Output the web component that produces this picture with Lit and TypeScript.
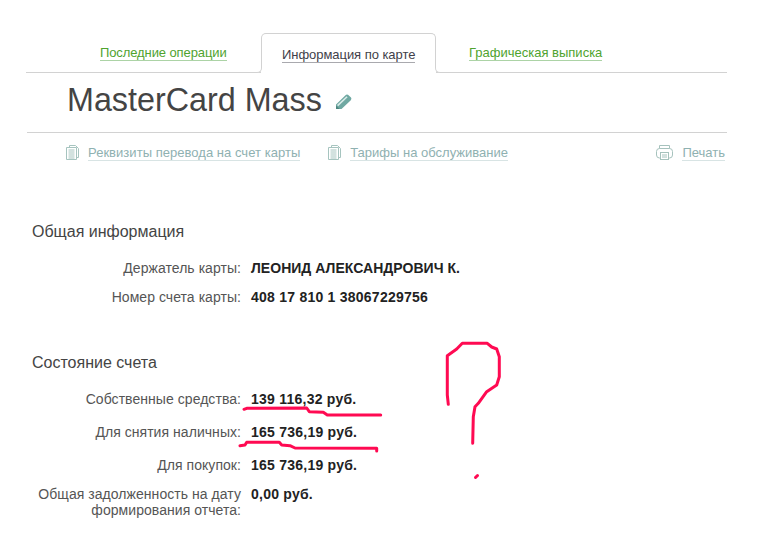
import { LitElement, html, css, svg } from "lit";
import { customElement } from "lit/decorators.js";

const docIcon = html`<svg class="ico" width="13" height="15" viewBox="0 0 13 15" fill="none" stroke="#a6c4bf" stroke-width="1">
  <path d="M3.500 2V.5h6l3 3v9h-1.500"/><path d="M.5 2.500h10v12H.5z" fill="#fff"/><path d="M2.500 5h6M2.500 7h6M2.500 9h6M2.500 11h6M2.500 13h6"/>
</svg>`;

const printIcon = html`<svg class="ico" width="17" height="15" viewBox="0 0 17 15" fill="none" stroke="#a6c2bd" stroke-width="1">
  <path d="M3.500 3.500V.5h10v3"/><rect x=".5" y="3.500" width="16" height="9.500" rx="3"/><rect x="4.500" y="7.500" width="8" height="7" fill="#fff"/><path d="M6 10h5M6 12h5"/>
</svg>`;

const pencilIcon = html`<svg class="pencil" width="16" height="15" viewBox="0 0 16 15">
  <path d="M0 15V10.500L9.500 1.200Q10.700 0 12 0.800L15 3.600Q16 5 14.800 6.200L5.500 15Z" fill="#6fa8a2"/>
  <path d="M1 11L10.500 2.300L11.600 3.300L2.200 12.300Z" fill="#d9ebe8"/>
  <path d="M0 15V11.500L3.700 15Z" fill="#4d8780"/>
</svg>`;

const strokes = [
  "244,409.3 246.7,408.3 306.7,408 309.3,411.7 323.3,412.3 327.3,415 380.7,415",
  "240,445.7 245,445 246.7,442.3 279.3,442.3 281.7,445 290,445.7 295,448 376.7,448.3 376.7,451",
  "448.3,404.3 447.3,395 447.3,355.7 456.7,349 462.3,343.3 487.3,343.3 491.7,347 496.7,349 499.3,356.7 499.3,376.7 496.7,385 486.7,391.7 478.3,403.3 475,406.7 473.3,416.7 472.7,443.3",
  "475.500,477.500 477.500,475.500",
];

interface Row { label: string; value: string; tight?: boolean; num?: boolean }

const info: Row[] = [
  { label: "Держатель карты:", value: "ЛЕОНИД АЛЕКСАНДРОВИЧ К.", tight: true },
  { label: "Номер счета карты:", value: "408 17 810 1 38067229756", tight: true, num: true },
];
const state: Row[] = [
  { label: "Собственные средства:", value: "139 116,32 руб.", num: true },
  { label: "Для снятия наличных:", value: "165 736,19 руб.", num: true },
  { label: "Для покупок:", value: "165 736,19 руб.", tight: true, num: true },
  { label: "Общая задолженность на дату формирования отчета:", value: "0,00 руб.", tight: true, num: true },
];

@customElement("app-root")
export class AppRoot extends LitElement {
  static styles = css`
    :host { display: block; position: relative; height: 554px; background: #fff; overflow: hidden;
      font-family: "Liberation Sans", Arial, sans-serif; font-size: 13px; color: #333; }
    a { text-decoration: none; cursor: pointer; }
    .page { padding: 33px 34px 0 26px; }
    .tabs { display: flex; height: 39px; }
    .side { display: flex; border-bottom: 1px solid #d2d2d2; height: 40px; box-sizing: border-box; }
    .side.left { width: 235px; padding-left: 74px; }
    .side.left a { letter-spacing: -.1px; }
    .side.right { flex: 1; padding-left: 33px; }
    .side a { margin-top: 13px; align-self: flex-start; color: #4fa32f; border-bottom: 1px solid #acd3a6; line-height: 14px; height: 14px; }
    .tab { position: relative; align-self: flex-start; box-sizing: border-box; width: 175px; height: 35px;
      border: 1px solid #d2d2d2; border-bottom: 0; border-radius: 5px 5px 0 0; padding: 13px 0 0 20px; }
    .tab a { color: #3f3f4a; border-bottom: 1px solid #a9a9ae; line-height: 14px; display: inline-block; height: 14px; letter-spacing: -.05px; }
    .tab::before, .tab::after { content: ""; position: absolute; top: 100%; width: 5px; height: 4px; background: #fff;
      border-bottom: 1px solid #d2d2d2; }
    .tab::before { left: -6px; border-right: 1px solid #d2d2d2; border-bottom-right-radius: 5px; }
    .tab::after { right: -6px; border-left: 1px solid #d2d2d2; border-bottom-left-radius: 5px; }
    .head { margin-left: 1px; height: 61px; border-bottom: 1px solid #d2d2d2; padding-left: 40px; box-sizing: border-box;
      display: flex; align-items: flex-start; }
    h1 { margin: 10px 0 0; font-size: 32.3px; font-weight: 400; line-height: 37px; color: #444; }
    .pencil { margin: 22px 0 0 14px; }
    .links { display: flex; align-items: center; margin: 11px 2px 0 40px; height: 17px; }
    .link { display: flex; align-items: center; margin-right: 28px; }
    .link:first-child a { letter-spacing: .035px; }
    .link:last-child { margin: 0 0 0 auto; }
    .ico { margin-right: 9px; flex: none; }
    .link a { color: #8fb1b1; border-bottom: 1px solid #d8e4e4; line-height: 15px; height: 15px; }
    h2 { margin: 0; font-size: 16px; font-weight: 400; line-height: 19px; color: #444; padding-left: 6px; }
    .s1 { margin-top: 61px; }
    .s2 { margin-top: 48px; }
    .rows { margin-top: 19px; }
    .row { display: flex; column-gap: 10px; margin-bottom: 17px; font-size: 14px; line-height: 16px; }
    .row.tight { margin-bottom: 13px; }
    .label { width: 215px; text-align: right; color: #555; flex: none; letter-spacing: .05px; }
    .value { font-weight: 700; color: #222; letter-spacing: .03px; }
    .value.num { letter-spacing: .24px; }
    .ink { position: absolute; inset: 0; width: 761px; height: 554px; pointer-events: none; }
    .ink polyline { fill: none; stroke: #ff0a52; stroke-width: 3; stroke-linejoin: round; stroke-linecap: round; }
  `;

  private rows(list: Row[]) {
    return html`<div class="rows">${list.map(
      (r) => html`<div class="row ${r.tight ? "tight" : ""}"><div class="label">${r.label}</div><div class="value ${r.num ? "num" : ""}">${r.value}</div></div>`
    )}</div>`;
  }

  render() {
    return html`
      <div class="page">
        <div class="tabs">
          <div class="side left"><a>Последние операции</a></div>
          <div class="tab"><a>Информация по карте</a></div>
          <div class="side right"><a>Графическая выписка</a></div>
        </div>
        <div class="head"><h1>MasterCard Mass</h1>${pencilIcon}</div>
        <div class="links">
          <div class="link">${docIcon}<a>Реквизиты перевода на счет карты</a></div>
          <div class="link">${docIcon}<a>Тарифы на обслуживание</a></div>
          <div class="link">${printIcon}<a>Печать</a></div>
        </div>
        <section class="s1"><h2>Общая информация</h2>${this.rows(info)}</section>
        <section class="s2"><h2>Состояние счета</h2>${this.rows(state)}</section>
      </div>
      <svg class="ink" viewBox="0 0 761 554">
        ${strokes.map((p) => svg`<polyline points=${p}></polyline>`)}
      </svg>
    `;
  }
}
